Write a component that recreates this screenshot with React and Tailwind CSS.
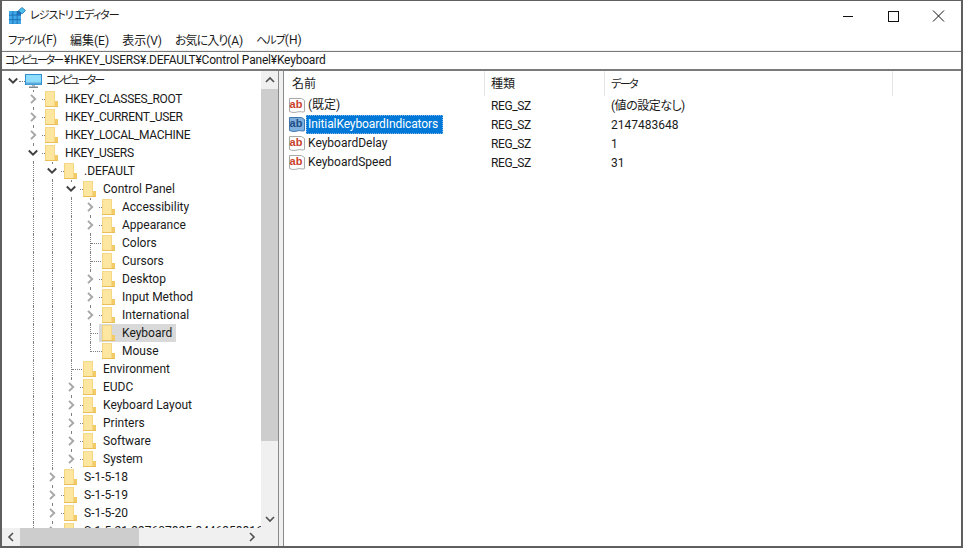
import React from 'react';

const FONT = "font-['Roboto','Noto_Sans_CJK_JP',sans-serif] [font-feature-settings:'palt']";

const AppIcon = () => (
  <svg width="18" height="18" viewBox="0 0 18 18" className="shrink-0">
    <rect x="1" y="4" width="12" height="13" fill="#1f6fb5" />
    <g fill="#3fa9e8">
      <rect x="1" y="4" width="3.4" height="3.6" />
      <rect x="5.3" y="4" width="3.4" height="3.6" />
      <rect x="1" y="8.6" width="3.4" height="3.6" />
      <rect x="5.3" y="8.6" width="3.4" height="3.6" />
      <rect x="9.6" y="8.6" width="3.4" height="3.6" />
      <rect x="1" y="13.2" width="3.4" height="3.6" />
      <rect x="5.3" y="13.2" width="3.4" height="3.6" />
      <rect x="9.6" y="13.2" width="3.4" height="3.6" />
    </g>
    <path d="M14 0.5l3.5 3-3.5 3.5-3.5-3.5z" fill="#4cc0e8" stroke="#1f6fb5" strokeWidth="0.8" />
  </svg>
);

const ComputerIcon = () => (
  <svg width="17" height="16" viewBox="0 0 17 16" className="shrink-0">
    <rect x="0.5" y="1.5" width="16" height="10" fill="#8fdcfb" stroke="#2f8fd0" />
    <rect x="1" y="9.5" width="15" height="2" fill="#58a9dc" />
    <rect x="7" y="12" width="3" height="1.5" fill="#a9b4bd" />
    <rect x="4" y="13.5" width="9" height="1.5" fill="#7f8a93" />
  </svg>
);

const FolderIcon = () => (
  <svg width="13" height="16" viewBox="0 0 13 16" className="shrink-0">
    <path d="M0 0h10V16H0z" fill="#fde7a0" />
    <path d="M0 0h1V16H0z" fill="#f3d47f" />
    <path d="M0 0h10v1H0z" fill="#f5d98a" />
    <path d="M10 10H13V16H10z" fill="#f3cb66" />
    <path d="M9 1h1V16H9z" fill="#f7d77f" />
    <path d="M0 15h13v1H0z" fill="#eabf58" />
  </svg>
);

const StringIcon = ({ selected }) => (
  <span className="relative flex w-[17px] h-[17px] shrink-0 items-center justify-center">
    <svg width="17" height="17" viewBox="0 0 17 17" className="absolute inset-0">
      <path
        d="M0.5 1.5H12.5l3 2V14.5c-2 1.4-3.5 -0.6-7 0.4s-5.5 0.6-8 -0.4z"
        fill={selected ? '#7fb0de' : '#ffffff'}
        stroke={selected ? '#3f78b0' : '#a8a8a8'}
      />
    </svg>
    <span className={`relative -mt-[3px] -ml-[3px] text-[11px] font-bold leading-none font-['Liberation_Sans',sans-serif] ${selected ? 'text-[#1f4e86]' : 'text-[#c9402a]'}`}>
      ab
    </span>
  </span>
);

const Chevron = ({ open }) => (
  <svg width="10" height="10" viewBox="0 0 10 10" className="shrink-0">
    {open ? (
      <path d="M0.8 2.5L5 6.7 9.2 2.5" fill="none" stroke="#404040" strokeWidth="1.9" />
    ) : (
      <path d="M3 0.8L7.2 5 3 9.2" fill="none" stroke="#a6a6a6" strokeWidth="1.9" />
    )}
  </svg>
);

const treeRows = [
  { label: 'HKEY_CLASSES_ROOT', level: 1, arrow: 'closed' },
  { label: 'HKEY_CURRENT_USER', level: 1, arrow: 'closed' },
  { label: 'HKEY_LOCAL_MACHINE', level: 1, arrow: 'closed' },
  { label: 'HKEY_USERS', level: 1, arrow: 'open' },
  { label: '.DEFAULT', level: 2, arrow: 'open' },
  { label: 'Control Panel', level: 3, arrow: 'open' },
  { label: 'Accessibility', level: 4, arrow: 'closed' },
  { label: 'Appearance', level: 4, arrow: 'closed' },
  { label: 'Colors', level: 4 },
  { label: 'Cursors', level: 4 },
  { label: 'Desktop', level: 4, arrow: 'closed' },
  { label: 'Input Method', level: 4, arrow: 'closed' },
  { label: 'International', level: 4, arrow: 'closed' },
  { label: 'Keyboard', level: 4, selected: true },
  { label: 'Mouse', level: 4, last: true },
  { label: 'Environment', level: 3 },
  { label: 'EUDC', level: 3, arrow: 'closed' },
  { label: 'Keyboard Layout', level: 3, arrow: 'closed' },
  { label: 'Printers', level: 3, arrow: 'closed' },
  { label: 'Software', level: 3, arrow: 'closed' },
  { label: 'System', level: 3, arrow: 'closed' },
  { label: 'S-1-5-18', level: 2, arrow: 'closed' },
  { label: 'S-1-5-19', level: 2, arrow: 'closed' },
  { label: 'S-1-5-20', level: 2, arrow: 'closed' },
  { label: 'S-1-5-21-397607825-3446358816', level: 2, arrow: 'closed' },
];

const TreeRow = ({ row }) => (
  <div className="flex h-[18px] items-center pl-[31px] whitespace-nowrap">
    {/* one dotted line for each parent level */}
    {Array.from({ length: row.level - 1 }).map((_, i) => (
      <span key={i} className="w-[19px] h-full shrink-0 border-l border-dotted border-[#808080]" />
    ))}

    {/* the row's own connector */}
    {row.last ? (
      <span className="self-start w-[12px] h-[10px] shrink-0 border-l border-dotted border-[#808080]">
        <span className="block w-[11px] h-full border-b border-dotted border-[#808080]" />
      </span>
    ) : (
      <span className="flex items-center w-[12px] h-full shrink-0 border-l border-dotted border-[#808080]">
        {row.arrow ? (
          <>
            <span className="flex items-center h-[14px] -ml-[6px] bg-white shrink-0">
              <Chevron open={row.arrow === 'open'} />
            </span>
            <span className="ml-[4px] w-[3px] border-t border-dotted border-[#808080] shrink-0" />
          </>
        ) : (
          <span className={`${row.selected ? 'w-[7px]' : 'w-[10px]'} border-t border-dotted border-[#808080] shrink-0`} />
        )}
      </span>
    )}

    <span className={`flex items-center h-[18px] ${row.selected ? '-ml-[3px] pl-[3px] bg-[#d9d9d9]' : ''}`}>
      <FolderIcon />
      <span className={`ml-[7px] pr-[4px] leading-[18px] ${row.level === 1 ? 'tracking-[-0.3px]' : ''}`}>{row.label}</span>
    </span>
  </div>
);

const ArrowUp = () => (
  <svg width="10" height="10" viewBox="0 0 10 10"><path d="M1 7l4-4 4 4" fill="none" stroke="#505050" strokeWidth="1.6" /></svg>
);
const ArrowDown = () => (
  <svg width="10" height="10" viewBox="0 0 10 10"><path d="M1 3l4 4 4-4" fill="none" stroke="#505050" strokeWidth="1.6" /></svg>
);
const ArrowLeft = () => (
  <svg width="10" height="10" viewBox="0 0 10 10"><path d="M7 1L3 5l4 4" fill="none" stroke="#505050" strokeWidth="1.6" /></svg>
);
const ArrowRight = () => (
  <svg width="10" height="10" viewBox="0 0 10 10"><path d="M3 1l4 4-4 4" fill="none" stroke="#505050" strokeWidth="1.6" /></svg>
);

const values = [
  { name: '(既定)', type: 'REG_SZ', data: '(値の設定なし)', dataClass: 'tracking-[-0.5px]' },
  { name: 'InitialKeyboardIndicators', type: 'REG_SZ', data: '2147483648', selected: true },
  { name: 'KeyboardDelay', type: 'REG_SZ', data: '1' },
  { name: 'KeyboardSpeed', type: 'REG_SZ', data: '31' },
];

export default function App() {
  return (
    <div className={`${FONT} w-[963px] h-[548px] flex flex-col overflow-hidden bg-white border-2 border-[#5f5f5f] border-t-[1px] text-[12px] text-[#1a1a1a]`}>
      {/* Title bar */}
      <div className="flex h-[30px] shrink-0 items-center pl-[6px]">
        <AppIcon />
        <span className="ml-[4px] text-[11px] tracking-[-1px]">レジストリ エディター</span>
        <div className="ml-auto flex items-center">
          <svg width="46" height="12" viewBox="0 0 46 12"><path d="M20 6.5h10" stroke="#111" /></svg>
          <svg width="46" height="12" viewBox="0 0 46 12"><rect x="19.5" y="1.5" width="10" height="10" fill="none" stroke="#111" /></svg>
          <svg width="46" height="12" viewBox="0 0 46 12"><path d="M18 0.5l11 11M29 0.5l-11 11" stroke="#111" /></svg>
        </div>
      </div>

      {/* Menu */}
      <div className="flex h-[20px] shrink-0 items-center border-b border-[#f0f0f0] pl-[6px] gap-[13px]">
        <span><span className="text-[11px] tracking-[-1px]">ファイル</span>(F)</span>
        <span>編集(E)</span>
        <span>表示(V)</span>
        <span><span className="tracking-[-1px]">お気に入り</span>(A)</span>
        <span><span className="text-[11px] tracking-[-1px]">ヘルプ</span>(H)</span>
      </div>

      {/* Address bar */}
      <div className="h-[20px] shrink-0 border-y-2 border-[#7a7a7a] border-t-[1px] pl-[3px] leading-[17px] whitespace-nowrap">
        <span className="text-[11px] tracking-[-2px]">コンピューター</span>
        <span className="ml-[2px] tracking-[-0.2px]">¥HKEY_USERS¥.DEFAULT¥Control Panel¥Keyboard</span>
      </div>

      <div className="flex flex-1 min-h-0">
        {/* Tree pane */}
        <div className="flex flex-col w-[277px] shrink-0 border-r border-[#8a8a8a]">
          <div className="flex flex-1 min-h-0">
            <div className="flex-1 min-w-0 overflow-hidden pt-[1px]">
              <div className="flex h-[18px] items-center pl-[6px] whitespace-nowrap">
                <Chevron open />
                <span className="w-[6px] ml-[1px] border-t border-dotted border-[#808080]" />
                <ComputerIcon />
                <span className="ml-[4px] text-[11px] tracking-[-2px]">コンピューター</span>
              </div>
              {treeRows.map((row) => (
                <TreeRow key={row.label} row={row} />
              ))}
            </div>
            <div className="flex flex-col w-[17px] shrink-0 bg-[#f0f0f0]">
              <div className="flex h-[18px] shrink-0 items-center justify-center"><ArrowUp /></div>
              <div className="h-[352px] shrink-0 bg-[#cdcdcd]" />
              <div className="flex-1" />
              <div className="flex h-[18px] shrink-0 items-center justify-center"><ArrowDown /></div>
            </div>
          </div>
          <div className="flex h-[18px] shrink-0 bg-[#f0f0f0]">
            <div className="flex w-[18px] shrink-0 items-center justify-center"><ArrowLeft /></div>
            <div className="w-[119px] shrink-0 bg-[#cdcdcd]" />
            <div className="flex-1" />
            <div className="flex w-[18px] shrink-0 items-center justify-center"><ArrowRight /></div>
            <div className="w-[17px] shrink-0 bg-[#f0f0f0]" />
          </div>
        </div>

        {/* Splitter */}
        <div className="w-[4px] shrink-0 bg-[#f0f0f0]" />

        {/* Value list */}
        <div className="flex-1 min-w-0 border-l border-[#8a8a8a] pl-[5px]">
          <div className="flex h-[25px] items-center">
            <div className="w-[196px] h-full pl-[3px] border-r border-[#e5e5e5] leading-[26px]">名前</div>
            <div className="w-[120px] h-full pl-[6px] border-r border-[#e5e5e5] leading-[26px]">種類</div>
            <div className="w-[288px] h-full pl-[6px] border-r border-[#e5e5e5] leading-[26px]">
              <span className="text-[11px] tracking-[-1.5px]">データ</span>
            </div>
          </div>
          {values.map((v) => (
            <div key={v.name} className="flex h-[19px] items-center whitespace-nowrap">
              <div className="flex w-[196px] items-center">
                <StringIcon selected={v.selected} />
                <span className={`px-[2px] h-[19px] leading-[18px] ${v.selected ? 'bg-[#0078d7] text-white outline-1 -outline-offset-1 outline-dotted outline-[#7fb8e8] pr-[5px] tracking-[-0.1px]' : ''}`}>
                  {v.name}
                </span>
              </div>
              <div className="w-[120px] pl-[6px] tracking-[-0.4px]">{v.type}</div>
              <div className={`pl-[6px] ${v.dataClass || ''}`}>{v.data}</div>
            </div>
          ))}
        </div>
      </div>
    </div>
  );
}
